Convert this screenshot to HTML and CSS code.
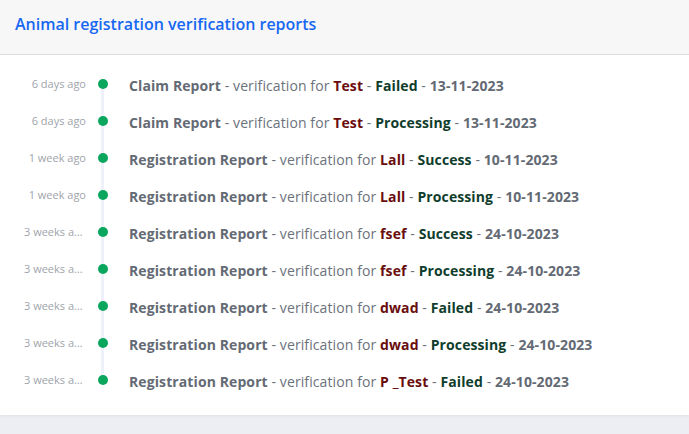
FILE: index.html
```html
<!DOCTYPE html>
<html>
<head>
<meta charset="utf-8">
<link rel="stylesheet" href="styles.css">
</head>
<body>
<div class="card">
  <div class="card-header"><h2 class="title">Animal registration verification reports</h2></div>
  <ul class="timeline">
    <li class="item"><span class="time">6 days ago</span><span class="marker"></span><span class="text"><b class="type">Claim Report</b> - verification for <b class="name">Test</b> - <b class="status">Failed</b> - <b class="date">13-11-2023</b></span></li>
    <li class="item"><span class="time">6 days ago</span><span class="marker"></span><span class="text"><b class="type">Claim Report</b> - verification for <b class="name">Test</b> - <b class="status">Processing</b> - <b class="date">13-11-2023</b></span></li>
    <li class="item"><span class="time">1 week ago</span><span class="marker"></span><span class="text"><b class="type">Registration Report</b> - verification for <b class="name">Lall</b> - <b class="status">Success</b> - <b class="date">10-11-2023</b></span></li>
    <li class="item"><span class="time">1 week ago</span><span class="marker"></span><span class="text"><b class="type">Registration Report</b> - verification for <b class="name">Lall</b> - <b class="status">Processing</b> - <b class="date">10-11-2023</b></span></li>
    <li class="item"><span class="time">3 weeks ago</span><span class="marker"></span><span class="text"><b class="type">Registration Report</b> - verification for <b class="name">fsef</b> - <b class="status">Success</b> - <b class="date">24-10-2023</b></span></li>
    <li class="item"><span class="time">3 weeks ago</span><span class="marker"></span><span class="text"><b class="type">Registration Report</b> - verification for <b class="name">fsef</b> - <b class="status">Processing</b> - <b class="date">24-10-2023</b></span></li>
    <li class="item"><span class="time">3 weeks ago</span><span class="marker"></span><span class="text"><b class="type">Registration Report</b> - verification for <b class="name">dwad</b> - <b class="status">Failed</b> - <b class="date">24-10-2023</b></span></li>
    <li class="item"><span class="time">3 weeks ago</span><span class="marker"></span><span class="text"><b class="type">Registration Report</b> - verification for <b class="name">dwad</b> - <b class="status">Processing</b> - <b class="date">24-10-2023</b></span></li>
    <li class="item"><span class="time">3 weeks ago</span><span class="marker"></span><span class="text"><b class="type">Registration Report</b> - verification for <b class="name">P _Test</b> - <b class="status">Failed</b> - <b class="date">24-10-2023</b></span></li>
  </ul>
</div>
</body>
</html>
```
FILE: styles.css
```css
html, body {
  margin: 0;
  padding: 0;
}
body {
  background: linear-gradient(#dfe1e8, #eceef4 20px);
  font-family: "Open Sans", "Noto Sans", sans-serif;
  min-height: 434px;
}
.card {
  background: #fff;
  height: 415px;
  box-shadow: 0 1px 3px rgba(0,0,0,0.06);
}
.card-header {
  height: 54px;
  background: #f7f7f7;
  border-bottom: 1px solid #dcdcdc;
  display: flex;
  align-items: center;
  padding-left: 15px;
}
.title {
  margin: 0;
  font-size: 16px;
  font-weight: 600;
  color: #1767f2;
  position: relative;
  top: -3px;
}
.timeline {
  list-style: none;
  margin: 0;
  padding: 12px 0 0 24px;
}
.item {
  display: grid;
  grid-template-columns: 62px 11px 1fr;
  column-gap: 11px;
  align-items: center;
  height: 37px;
}
.item .text { margin-left: 10px; }
.time {
  font-size: 11px;
  color: #a0a4ab;
  text-align: right;
  white-space: nowrap;
  overflow: hidden;
  text-overflow: ellipsis;
  position: relative;
  top: -2px;
}
.marker {
  position: relative;
  height: 37px;
  display: flex;
  align-items: center;
  justify-content: center;
}
.marker::before {
  content: "";
  position: absolute;
  left: 4px;
  width: 3px;
  top: 16px;
  height: 37px;
  background: #eef0fa;
}
.item:last-child .marker::before { display: none; }
.marker::after {
  content: "";
  position: relative;
  top: -2px;
  width: 10px;
  height: 10px;
  border-radius: 50%;
  background: #0aa65d;
}
.text {
  font-size: 14px;
  color: #6c727c;
  white-space: nowrap;
  letter-spacing: 0.1px;
}
.text b { font-weight: 700; }
.type, .date { color: #646a74; }
.name { color: #6a0d0d; }
.status { color: #0f3d2c; }
```
